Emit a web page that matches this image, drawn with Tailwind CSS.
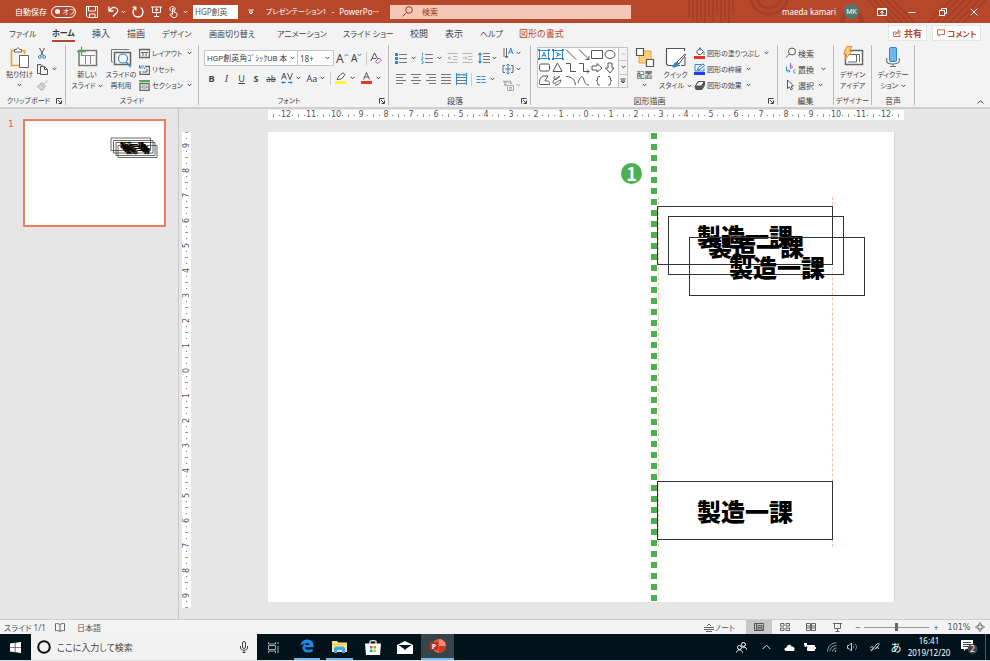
<!DOCTYPE html>
<html lang="ja">
<head>
    <meta charset="UTF-8">
    <meta name="viewport" content="width=device-width, initial-scale=1.0">
    <title>プレゼンテーション1 - PowerPoint</title>
    <script src="https://cdn.jsdelivr.net/npm/@tailwindcss/browser@4"></script>
</head>
<body class="flex min-h-screen flex-col overflow-hidden bg-[#e6e6e6] font-['Noto_Sans','Noto_Sans_CJK_JP',sans-serif] text-[8px] leading-[11px] whitespace-nowrap text-[#444] [font-feature-settings:'palt']">
    <!-- Shared icons -->
    <svg class="hidden">
        <symbol id="chev" viewBox="0 0 5 4"><path d="M.7 .9L2.5 2.8L4.3 .9" fill="none" stroke="currentColor" stroke-width="1"/></symbol>
        <symbol id="launch" viewBox="0 0 6 6"><path d="M.5 5.5V.5H5.500M2 2L5 5M5.500 2.500V5.500H2.500" fill="none" stroke="currentColor"/></symbol>
    </svg>

    <!-- Title bar -->
    <header class="relative flex h-[23px] shrink-0 items-center bg-[#b7472a] text-white">
        <svg class="absolute top-0 right-0 h-[23px] w-[310px]" viewBox="0 0 310 23" fill="none" stroke="#a53f26" stroke-width="2">
            <path d="M9 0V17M13 0V21M17 0V23M21 0V20M25 0V23M29 0V17M33 0V22M37 0V14M41 0V23M45 0V20M49 0V23M53 0V14"/>
            <path d="M71 0C73 9 80 14 89 14S105 9 107 0M77 0C79 5 83 8 89 8S99 5 101 0" stroke-width="3"/>
            <circle cx="172" cy="22" r="10" stroke-width="5"/>
            <path d="M188 0L211 23M194 0L217 23M200 0L223 23M206 0L229 23M212 0L235 23" />
            <path d="M248 23L271 0M255 23L278 0M262 23L285 0M269 23L292 0M276 23L299 0M283 23L306 0"/>
        </svg>
        <div class="relative flex w-[390px] shrink-0 items-center">
            <label for="autosave" class="w-[36px] pl-[15px] box-content">自動保存</label>
            <span class="relative flex h-[12px] w-[25px] items-center rounded-full border border-white">
                <input id="autosave" type="checkbox" class="absolute inset-0 size-full appearance-none">
                <span class="ml-[3px] size-[5px] rounded-full bg-white"></span>
                <span class="ml-[3px] text-[7px]">オフ</span>
            </span>
            <button class="flex w-[32px] justify-center" aria-label="保存"><svg class="size-[12px]" viewBox="0 0 12 12" fill="none" stroke="#fff"><path d="M.5 .5H11.500V11.500H2L.5 10zM2.500 .5V5H9.500V.5M3.500 11.500V8H9V11.500"/></svg></button>
            <button class="flex w-[11px] justify-center" aria-label="元に戻す"><svg class="size-[11px]" viewBox="0 0 11 11" fill="none" stroke="#fff" stroke-width="1.300"><path d="M1 .5V5H5.500M1 5C3 2 5 1 7 1.500C10 2.500 10.500 5 8.500 7L5 10.500"/></svg></button>
            <button class="flex w-[9px] justify-center" aria-label="元に戻すの一覧"><svg class="h-1 w-[5px]"><use href="#chev"/></svg></button>
            <button class="flex w-[20px] justify-center" aria-label="やり直し"><svg class="size-[12px]" viewBox="0 0 12 12" fill="none" stroke="#fff" stroke-width="1.300"><path d="M3.500 1.500C-.5 4 .5 11 6 11S12.500 4 8.500 1.500M.5 1.200H3.800V4.500"/></svg></button>
            <button class="flex w-[17px] justify-center" aria-label="最初から"><svg class="size-[11px]" viewBox="0 0 11 11" fill="none" stroke="#fff"><path d="M0 1H11M1.500 1V6.500H9.500V1M5.500 6.500V10M3 10.500H8M5 2.500L7 3.800L5 5z"/></svg></button>
            <button class="flex w-[16px] justify-center" aria-label="タッチ/マウス モード"><svg class="h-[12px] w-[9px]" viewBox="0 0 9 12" fill="none" stroke="#fff"><path d="M2.500 5.500C0 4 .5 .6 3.500 .6S7 4 5 5M3.500 8.500V2.500C4.500 2 5 2.500 5 3.500V6L7.500 7C8.500 8 8 11 6.500 11.400C4 12 2.500 11 1 8.500C1.500 7.500 2.500 7.500 3.500 8.500"/></svg></button>
            <button class="flex w-[9px] justify-center" aria-label="モードの一覧"><svg class="h-1 w-[5px]"><use href="#chev"/></svg></button>
            <input aria-label="フォント" value="HGP創英" class="ml-[3px] h-[14px] w-[45px] bg-white pl-[2px] text-[#555]">
            <button class="flex w-[26px] justify-center" aria-label="クイック アクセスのユーザー設定"><svg class="size-[6px]" viewBox="0 0 6 6" fill="none" stroke="#fff"><path d="M.5 1H5.500M1 3L3 5L5 3z"/></svg></button>
            <h1 class="flex gap-[5px] pl-[2px]"><span class="text-[7px]">プレゼンテーション1</span><span>-</span><span>PowerPo···</span></h1>
        </div>
        <label class="relative flex h-[14px] w-[241px] shrink-0 items-center bg-[#f7c7b6]">
            <svg class="ml-[12px] size-[11px]" viewBox="0 0 11 11" fill="none" stroke="#9c3b24"><circle cx="7" cy="4" r="3.300"/><path d="M4.500 6.500L.6 10.400"/></svg>
            <input type="search" aria-label="検索" placeholder="検索" class="ml-[9px] w-[160px] placeholder:text-[#9c3b24]">
        </label>
        <div class="relative ml-auto flex items-center">
            <span class="mr-[8px]">maeda kamari</span>
            <button class="mr-[7px] size-[15px] rounded-full bg-[#4f7a70] text-[7px]">MK</button>
            <button class="flex w-[31px] justify-center" aria-label="リボンの表示オプション"><svg class="h-[8px] w-[10px]" viewBox="0 0 10 8" fill="none" stroke="#fff"><path d="M.5 .5H9.500V7.500H.5zM.5 1.500H9.500M5 7V3M3.300 4.700L5 3L6.700 4.700"/></svg></button>
            <button class="flex w-[30px] justify-center" aria-label="最小化"><svg class="size-[8px]" viewBox="0 0 8 8"><path d="M.5 4.500H7.500" stroke="#fff"/></svg></button>
            <button class="flex w-[31px] justify-center" aria-label="元のサイズに戻す"><svg class="size-[8px]" viewBox="0 0 8 8" fill="none" stroke="#fff"><path d="M.5 2.500H5.500V7.500H.5zM2.500 2.500V.5H7.500V5.500H5.500"/></svg></button>
            <button class="flex w-[32px] justify-center" aria-label="閉じる"><svg class="size-[8px]" viewBox="0 0 8 8"><path d="M.7 .7L7.300 7.300M7.300 .7L.7 7.300" stroke="#fff"/></svg></button>
        </div>
    </header>

    <!-- Ribbon tabs -->
    <nav class="flex h-[20px] shrink-0 items-center bg-[#f3f3f3] pl-[9px] text-[9px] leading-[15px]">
        <a href="#" class="w-[43px] text-[8px]">ファイル</a>
        <span class="w-[40px]"><a href="#" class="inline-block border-b-2 border-[#b7472a] text-[8px] font-bold text-[#333]">ホーム</a></span>
        <a href="#" class="w-[35px]">挿入</a>
        <a href="#" class="w-[35px]">描画</a>
        <a href="#" class="w-[47px] text-[8px]">デザイン</a>
        <a href="#" class="w-[68px] text-[8px]">画面切り替え</a>
        <a href="#" class="w-[66px] text-[8px]">アニメーション</a>
        <a href="#" class="w-[67px] text-[8px]">スライド ショー</a>
        <a href="#" class="w-[35px]">校閲</a>
        <a href="#" class="w-[35px]">表示</a>
        <a href="#" class="w-[39px] text-[8px]">ヘルプ</a>
        <a href="#" class="text-[#c0472a]">図形の書式</a>
        <div class="mr-[9px] ml-auto flex gap-[5px] font-bold text-[#b7472a]">
            <button class="flex h-[16px] w-[39px] items-center justify-center gap-[3px] border border-[#e5e5e5] bg-white"><svg class="size-[8px]" viewBox="0 0 8 8" fill="none" stroke="currentColor" stroke-width=".8"><path d="M3 3H.5V7.500H7V5.500M2.500 5.500C3 3.500 4 2.700 5.500 2.700V1L7.600 3L5.500 5V3.800C4 3.800 3.300 4.500 2.500 5.500z"/></svg>共有</button>
            <button class="flex h-[16px] w-[49px] items-center justify-center gap-[3px] border border-[#e5e5e5] bg-white text-[8px]"><svg class="size-[8px]" viewBox="0 0 8 8" fill="none" stroke="currentColor" stroke-width=".8"><path d="M.5 .8H7.500V5.500H3.500L2 7.300V5.500H.5z"/></svg>コメント</button>
        </div>
    </nav>

    <!-- Ribbon -->
    <div class="flex h-[66px] shrink-0 border-b-2 border-[#cfcfcf] bg-[#f3f3f3] pt-[2px] pb-[2px]">
        <section class="flex w-[66px] shrink-0 flex-col justify-between border-r border-[#bbb]">
            <div class="flex pl-[4px]">
                <button class="flex w-[31px] flex-col items-center">
                    <svg class="h-[24px] w-[20px]" viewBox="0 0 20 24" fill="none"><path d="M9 20.500H1.500V5.500H14.500V9" stroke="#eba03c" stroke-width="1.600"/><path d="M4.500 7V4.500H6.500C6.500 2.500 9.500 2.500 9.500 4.500H11.500V7z" fill="#fff" stroke="#666"/><path d="M9.500 10.500H18.500V22.500H9.500z" fill="#fff" stroke="#666"/></svg>
                    <span class="text-[7px]">貼り付け</span>
                    <svg class="mt-[3px] h-1 w-[5px]"><use href="#chev"/></svg>
                </button>
                <div class="flex flex-col pl-[1px]">
                    <button class="flex h-[16px] w-[12px] items-center justify-center" aria-label="切り取り"><svg class="h-[11px] w-[8px]" viewBox="0 0 8 11" fill="none"><path d="M1.500 0L5.500 8M6.500 0L2.500 8" stroke="#555"/><circle cx="1.800" cy="9" r="1.400" stroke="#2b88d8"/><circle cx="6.200" cy="9" r="1.400" stroke="#2b88d8"/></svg></button>
                    <button class="flex h-[16px] items-center gap-[4px]" aria-label="コピー"><svg class="size-[12px]" viewBox="0 0 12 12" fill="none" stroke="#555"><path d="M4 10.500H1.500V1.500H5L7 3.500M4.500 3.500H8.500L11.500 6.500V11.500H4.500zM8.500 3.500V6.500H11.500"/></svg><svg class="h-1 w-[5px]"><use href="#chev"/></svg></button>
                    <button class="flex h-[16px] w-[12px] items-center justify-center" aria-label="書式のコピー"><svg class="size-[11px]" viewBox="0 0 11 11" fill="#ddd" stroke="#aaa"><path d="M10.500 .5L7.500 3.500M5 2.500L8.500 6L7 7.500L3.500 4zM3.500 4L.5 6.500L5 10.500L7 7.500"/></svg></button>
                </div>
            </div>
            <h2 class="flex items-center justify-between pr-[3px] pl-[7px] text-[7px] leading-[9px]">クリップボード<svg class="size-[6px]"><use href="#launch"/></svg></h2>
        </section>

        <section class="flex w-[133px] shrink-0 flex-col justify-between border-r border-[#bbb]">
            <div class="flex pl-[4px]">
                <button class="flex w-[34px] flex-col items-center text-[7px]">
                    <svg class="h-[24px] w-[22px]" viewBox="0 0 22 24" fill="none"><path d="M3 5.500H20.500V20.500H3z" fill="#f8f8f8" stroke="#777" stroke-width="1.500"/><path d="M5 10.500H19M9.500 10.500V19M14.500 10.500V19" stroke="#888"/><path d="M5.500 1.500V11M1 6.500H10" stroke="#4caf50" stroke-width="1.300"/></svg>
                    <span>新しい</span>
                    <span class="flex items-center gap-[2px]">スライド<svg class="h-1 w-[5px]"><use href="#chev"/></svg></span>
                </button>
                <button class="flex w-[34px] flex-col items-center text-[7px]">
                    <svg class="h-[24px] w-[22px]" viewBox="0 0 22 24" fill="none"><path d="M3 17H1.500V4.500H19" stroke="#777"/><path d="M4.500 7.500H20.500V19.500H4.500z" stroke="#666" stroke-width="1.500"/><circle cx="13" cy="13.500" r="4.500" fill="#fff" stroke="#2b88d8" stroke-width="1.200"/><path d="M16 17L21 22" stroke="#2b88d8" stroke-width="1.500"/></svg>
                    <span>スライドの</span>
                    <span>再利用</span>
                </button>
                <div class="flex flex-col pl-[1px]">
                    <button class="flex h-[16px] items-center gap-[2px]"><svg class="size-[11px]" viewBox="0 0 11 11" fill="none" stroke="#666"><path d="M.5 1.500H10.500V9.500H.5z" stroke-width="1.400"/><path d="M2 4.500H9M4 4.500V8M7 4.500V8"/></svg><span class="text-[7px]">レイアウト</span><svg class="ml-[2px] h-1 w-[5px]"><use href="#chev"/></svg></button>
                    <button class="flex h-[16px] items-center gap-[2px]"><svg class="size-[11px]" viewBox="0 0 11 11" fill="none" stroke="#666"><path d="M6 2.500H10.500V10.500H1V7" stroke-width="1.300"/><path d="M3 8H8V5"/><path d="M.5 1V4H3.500M1 4C2 1 5 1 5.500 5" stroke="#2b88d8"/></svg><span class="text-[7px]">リセット</span></button>
                    <button class="flex h-[16px] items-center gap-[2px]"><svg class="size-[11px]" viewBox="0 0 11 11" fill="none"><path d="M0 1H11" stroke="#4caf50" stroke-width="2"/><path d="M1 3.500H10V10.500H1z" stroke="#666" stroke-width="1.300"/><path d="M3 6H8V8H3z" stroke="#888"/></svg><span class="text-[7px]">セクション</span><svg class="ml-[2px] h-1 w-[5px]"><use href="#chev"/></svg></button>
                </div>
            </div>
            <h2 class="text-center text-[7px] leading-[9px]">スライド</h2>
        </section>

        <section class="flex w-[190px] shrink-0 flex-col justify-between border-r border-[#bbb]">
            <div class="flex flex-col gap-[5px] pt-[5px] pl-[5px]">
                <div class="flex h-[16px] items-center">
                    <span class="relative flex h-[16px] w-[94px] items-center border border-[#c4c4c4] bg-white">
                        <select aria-label="フォント名" class="w-full appearance-none pl-[2px] font-['Roboto','Noto_Sans_CJK_JP',sans-serif] text-[8px]"><option>HGP創英角ｺﾞｼｯｸUB 本</option></select>
                        <svg class="pointer-events-none absolute right-[2px] h-1 w-[5px]"><use href="#chev"/></svg>
                    </span>
                    <span class="relative flex h-[16px] w-[36px] items-center border border-l-0 border-[#c4c4c4] bg-white">
                        <select aria-label="フォント サイズ" class="w-full appearance-none pl-[2px] text-[8px]"><option>18+</option></select>
                        <svg class="pointer-events-none absolute right-[3px] h-1 w-[5px]"><use href="#chev"/></svg>
                    </span>
                    <button class="flex w-[16px] pl-[2px] text-[12px]" aria-label="フォント サイズの拡大">A<svg class="h-1 w-[5px] rotate-180 text-[#2b88d8]"><use href="#chev"/></svg></button>
                    <button class="mr-[1px] flex w-[15px] pl-[1px] text-[10px]" aria-label="フォント サイズの縮小">A<svg class="h-1 w-[5px] text-[#2b88d8]"><use href="#chev"/></svg></button>
                    <span class="h-[13px] w-px bg-[#ccc]"></span>
                    <button class="flex w-[18px] justify-center" aria-label="書式のクリア"><svg class="size-[12px]" viewBox="0 0 12 12" fill="none"><path d="M.8 9L4.500 .8L8 8M2 6.500H6" stroke="#555"/><path d="M5.500 9.500L9 6L11.500 8L8.500 11H6.500z" fill="#f3f3f3" stroke="#b455c0"/></svg></button>
                </div>
                <div class="flex h-[14px] items-center text-[9px]">
                    <button class="w-[15px] font-bold">B</button>
                    <button class="w-[15px] font-['Liberation_Serif',serif] text-[10px] italic">I</button>
                    <button class="w-[15px] underline">U</button>
                    <button class="w-[14px] font-bold">S</button>
                    <button class="w-[16px] text-[8px] line-through">ab</button>
                    <button class="flex w-[23px] items-center gap-[3px] pl-[2px]" aria-label="文字の間隔"><svg class="h-[13px] w-[12px]" viewBox="0 0 12 13" fill="none"><path d="M.5 7.500L3 1L5.500 7.500M1.500 5H4.500M6.500 1L9 7.500L11.500 1" stroke="#555"/><path d="M.8 10.500H5M2.500 9L1 10.500L2.500 12M7 10.500H11M9.500 9L11 10.500L9.500 12" stroke="#2b88d8"/></svg><svg class="h-1 w-[5px]"><use href="#chev"/></svg></button>
                    <button class="flex w-[28px] items-center justify-center gap-[3px]">Aa<svg class="h-1 w-[5px]"><use href="#chev"/></svg></button>
                    <span class="h-[13px] w-px bg-[#ccc]"></span>
                    <button class="flex w-[27px] items-center justify-center gap-[4px]" aria-label="蛍光ペンの色"><svg class="h-[12px] w-[11px]" viewBox="0 0 11 12"><path d="M2 7.500L4 4L8 .8L10 2.500L7 6.500L3.500 7.500z" fill="#fff" stroke="#555"/><path d="M0 9H11V12H0z" fill="#fff23c"/></svg><svg class="h-1 w-[5px]"><use href="#chev"/></svg></button>
                    <button class="flex w-[25px] items-center justify-center gap-[4px]" aria-label="フォントの色"><svg class="h-[12px] w-[11px]" viewBox="0 0 11 12"><path d="M2.500 7.500L5.500 .5L8.500 7.500M3.500 5H7.500" fill="none" stroke="#555"/><path d="M0 9H11V12H0z" fill="#ee3124"/></svg><svg class="h-1 w-[5px]"><use href="#chev"/></svg></button>
                </div>
            </div>
            <h2 class="flex items-center pr-[3px] text-[7px] leading-[9px]"><span class="flex-1 text-center">フォント</span><svg class="size-[6px]"><use href="#launch"/></svg></h2>
        </section>

        <section class="flex w-[142px] shrink-0 flex-col justify-between border-r border-[#bbb]">
            <div class="flex pl-[6px]">
                <div class="flex w-[107px] flex-col gap-[7px] pt-[6px]">
                    <div class="flex h-[14px] items-center">
                        <button class="flex w-[26px] items-center gap-[4px]" aria-label="箇条書き"><svg class="size-[12px]" viewBox="0 0 12 12"><path d="M4 2.500H12M4 6.500H12M4 10.500H12" stroke="#777"/><path d="M0 1H3V4H0zM0 5H3V8H0zM0 9H3V12H0z" fill="#2b88d8"/></svg><svg class="h-1 w-[5px]"><use href="#chev"/></svg></button>
                        <button class="flex w-[26px] items-center gap-[4px]" aria-label="段落番号"><svg class="size-[12px]" viewBox="0 0 12 12" fill="none"><path d="M4 2.500H12M4 6.500H12M4 10.500H12" stroke="#777"/><path d="M1.500 .5V3.500M.5 5H2V6L.5 7.500H2M.5 9H2V11.500H.5" stroke="#2b88d8" stroke-width=".8"/></svg><svg class="h-1 w-[5px]"><use href="#chev"/></svg></button>
                        <button class="w-[15px]" aria-label="インデントを減らす"><svg class="h-[12px] w-[11px]" viewBox="0 0 11 12" fill="none" stroke="#b5b5b5"><path d="M.5 1.500H10.500M6 4.500H10.500M6 7.500H10.500M.5 10.500H10.500M1 6H5M2.500 4.500L1 6L2.500 7.500"/></svg></button>
                        <button class="w-[16px]" aria-label="インデントを増やす"><svg class="h-[12px] w-[11px]" viewBox="0 0 11 12" fill="none" stroke="#b5b5b5"><path d="M.5 1.500H10.500M6 4.500H10.500M6 7.500H10.500M.5 10.500H10.500M1 6H5M3.500 4.500L5 6L3.500 7.500"/></svg></button>
                        <button class="flex items-center gap-[2px]" aria-label="行間"><svg class="size-[12px]" viewBox="0 0 12 12" fill="none"><path d="M5 1.500H12M5 4.500H12M5 7.500H12M5 10.500H12" stroke="#777"/><path d="M2 1V11M.5 3L2 1L3.500 3M.5 9L2 11L3.500 9" stroke="#2b88d8" stroke-width="1.200"/></svg><svg class="h-1 w-[5px]"><use href="#chev"/></svg></button>
                    </div>
                    <div class="flex h-[14px] items-center gap-[4px] pl-[1px]">
                        <button aria-label="左揃え"><svg class="h-[12px] w-[11px]" viewBox="0 0 11 12" stroke="#777"><path d="M0 1.500H10M0 4.500H7M0 7.500H10M0 10.500H7"/></svg></button>
                        <button aria-label="中央揃え"><svg class="h-[12px] w-[11px]" viewBox="0 0 11 12" stroke="#777"><path d="M0 1.500H10M2 4.500H8M0 7.500H10M2 10.500H8"/></svg></button>
                        <button aria-label="右揃え"><svg class="h-[12px] w-[11px]" viewBox="0 0 11 12" stroke="#777"><path d="M0 1.500H10M3 4.500H10M0 7.500H10M3 10.500H10"/></svg></button>
                        <button aria-label="両端揃え"><svg class="h-[12px] w-[11px]" viewBox="0 0 11 12" stroke="#777"><path d="M0 1.500H10M0 4.500H10M0 7.500H10M0 10.500H10"/></svg></button>
                        <button aria-label="均等割り付け"><svg class="h-[12px] w-[11px]" viewBox="0 0 11 12" stroke="#777"><path d="M1 4.500H10M1 7.500H10M1 10.500H10"/><path d="M.5 0V12M10.500 0V12M1 1.800H10M3 .5V3M8 .5V3" stroke="#2b88d8"/></svg></button>
                        <span class="h-[13px] w-px bg-[#ccc]"></span>
                        <button class="flex items-center gap-[4px]" aria-label="段組み"><svg class="h-[7px] w-[10px]" viewBox="0 0 10 7" stroke="#2b88d8"><path d="M.5 .5H4.500M5.500 .5H9.500M.5 3.500H4.500M5.500 3.500H9.500M.5 6.500H4.500M5.500 6.500H9.500"/></svg><svg class="h-1 w-[5px]"><use href="#chev"/></svg></button>
                    </div>
                </div>
                <div class="flex flex-col">
                    <button class="flex h-[16px] items-center gap-[2px]" aria-label="文字列の方向"><svg class="size-[12px]" viewBox="0 0 12 12" fill="none"><path d="M2 1V10M4.500 1V11M3 9L4.500 11L6 9" stroke="#666"/><path d="M6.500 7L8.800 1L11 7M7.500 5H10" stroke="#2b88d8"/></svg><svg class="h-1 w-[5px]"><use href="#chev"/></svg></button>
                    <button class="flex h-[16px] items-center gap-[2px]" aria-label="文字の配置"><svg class="size-[12px]" viewBox="0 0 12 12" fill="none"><path d="M3 2.500H1V9.500H3M9 2.500H11V9.500H9" stroke="#666"/><path d="M6 1V11M3 6H9M4.500 2.500L6 1L7.500 2.500M4.500 9.500L6 11L7.500 9.500" stroke="#2b88d8"/></svg><svg class="h-1 w-[5px]"><use href="#chev"/></svg></button>
                    <button class="flex h-[16px] items-center gap-[2px] text-[#aaa]" aria-label="SmartArt に変換"><svg class="size-[12px]" viewBox="0 0 12 12" fill="none" stroke="#aaa"><path d="M1 2.500H8L9.500 5M3 2.500V6H5" stroke-width="1.500"/><path d="M5.500 6.500H11.500V11.500H5.500zM7 8.500H10M7 10H10"/></svg><svg class="h-1 w-[5px]"><use href="#chev"/></svg></button>
                </div>
            </div>
            <h2 class="flex items-center pr-[3px] leading-[9px]"><span class="flex-1 text-center">段落</span><svg class="size-[6px]"><use href="#launch"/></svg></h2>
        </section>

        <section class="flex w-[247px] shrink-0 flex-col justify-between border-r border-[#bbb]">
            <div class="flex pl-[6px]">
                <div class="mt-[2px] flex h-[41px] w-[91px] border border-[#c4c4c4] bg-white">
                    <svg class="h-[39px] w-[80px]" viewBox="0 0 80 39" fill="none" stroke="#555">
                        <g stroke="#2b88d8"><path d="M1.500 2.500H10.500V10.500H1.500zM15.500 2.500H24.500V10.500H15.500z"/><path d="M4 9L6 4L8 9M5 7.500H7M18 4.500L22.500 6.500L18 8.500M19.500 5V8"/></g>
                        <g fill="#2b88d8" stroke="none"><path d="M0 1H2V3H0zM10 1H12V3H10zM0 10H2V12H0zM10 10H12V12H10zM14 1H16V3H14zM24 1H26V3H24zM14 10H16V12H14zM24 10H26V12H24z"/></g>
                        <path d="M28 1.500L38 11.500M41 1.500L51 11.500M51 8V11.500H47.500"/>
                        <path d="M53.500 2.500H64.500V10.500H53.500z"/><ellipse cx="72" cy="6.500" rx="5" ry="4"/>
                        <rect x="1.500" y="16" width="10" height="7" rx="1.500"/><path d="M19.500 15L24 23.500H15z"/>
                        <path d="M28 15.500H32.500V23.500H38M41 15.500H45.500V23.500H51M49 21.500L51 23.500L49 25.500"/>
                        <path d="M54 18H59V15.500L64 20L59 24V22H54zM70 15V20H67.500L72 25L76 20H74V15z"/>
                        <path d="M5 28C1 29 1 36.500 2 36.500H11.500C12 34 10 32 8 33C5 33 9 31 10 28zM17 28C14 32 18 33 21 29C25 27 15 31 15 34C16 38 20 32 23 32C22 36 20 37 17 37"/>
                        <path d="M28 28.500C34 28.500 37 32 37.500 37M40 35C43 26 45 28 46 32S49 37 51 37"/>
                        <path d="M62 28.500H61C59.500 28.500 59.500 29 59.500 31S59 32.500 58 32.500C59 32.500 59.500 32.500 59.500 34.500S59.500 37 61 37H62M70 28.500H71C72.500 28.500 72.500 29 72.500 31S73 32.500 74 32.500C73 32.500 72.500 32.500 72.500 34.500S72.500 37 71 37H70"/>
                    </svg>
                    <div class="flex flex-1 flex-col divide-y divide-[#c4c4c4] border-l border-[#c4c4c4] bg-[#f3f3f3]">
                        <button class="flex flex-1 items-center justify-center" aria-label="上へ"><svg class="h-1 w-[5px] rotate-180 text-[#bbb]"><use href="#chev"/></svg></button>
                        <button class="flex flex-1 items-center justify-center" aria-label="下へ"><svg class="h-1 w-[5px]"><use href="#chev"/></svg></button>
                        <button class="flex flex-1 items-center justify-center" aria-label="その他"><svg class="size-[6px]" viewBox="0 0 6 6" fill="none" stroke="#444"><path d="M.5 1H5.500M1 3L3 5L5 3z"/></svg></button>
                    </div>
                </div>
                <button class="ml-[3px] flex w-[27px] flex-col items-center">
                    <svg class="h-[24px] w-[20px]" viewBox="0 0 20 24"><path d="M4 6H16V18H4z" fill="#fbcf7f" stroke="#eba03c"/><path d="M1.500 3.500H8.500V10.500H1.500zM11.500 14.500H18.500V21.500H11.500z" fill="#fff" stroke="#555" stroke-width="1.200"/></svg>
                    <span>配置</span>
                    <svg class="mt-[3px] h-1 w-[5px]"><use href="#chev"/></svg>
                </button>
                <button class="flex w-[35px] flex-col items-center text-[7px]">
                    <svg class="h-[24px] w-[22px]" viewBox="0 0 22 24"><path d="M15 20.500H3L1.500 19V3.500H19.500V6" fill="#fff" stroke="#555" stroke-width="1.200"/><path d="M20 9L12 17L14 19L20.500 10z" fill="#fff" stroke="#555"/><path d="M7 22C9 21 8 17 12 17L14 19C13 22 10 23 7 22z" fill="#2b88d8"/><path d="M20 12V20.500H16" fill="none" stroke="#555"/></svg>
                    <span>クイック</span>
                    <span class="flex items-center gap-[3px]">スタイル<svg class="h-1 w-[5px]"><use href="#chev"/></svg></span>
                </button>
                <div class="flex flex-col pl-[1px]">
                    <button class="flex h-[16px] items-center gap-[1px]"><svg class="size-[12px]" viewBox="0 0 12 12"><path d="M2.500 5L6 1L9.500 4.500L6.500 7.500H4.500z" fill="#fff" stroke="#555"/><path d="M6 0V4M10 5V8" stroke="#2b88d8"/><path d="M0 9H11V12H0z" fill="#ee3124"/></svg><span class="text-[7px]">図形の塗りつぶし</span><svg class="ml-[3px] h-1 w-[5px]"><use href="#chev"/></svg></button>
                    <button class="flex h-[16px] items-center gap-[1px]"><svg class="size-[12px]" viewBox="0 0 12 12"><path d="M7 1.500H1V8H10V5" fill="none" stroke="#2b88d8"/><path d="M3.500 7L4.500 4.500L9 .8L10.500 2.500L6 6.500z" fill="#fff" stroke="#2b6aa8"/><path d="M0 9H11V12H0z" fill="#1f3cf0"/></svg><span class="text-[7px]">図形の枠線</span><svg class="ml-[3px] h-1 w-[5px]"><use href="#chev"/></svg></button>
                    <button class="flex h-[16px] items-center gap-[1px]"><svg class="size-[12px]" viewBox="0 0 12 12"><path d="M1 8L4 2.500H10.500V6L8 10.500H2z" fill="#555" stroke="#555"/><path d="M1.500 7L4.500 2.500H10L7.500 7z" fill="#fff" stroke="#555"/></svg><span class="text-[7px]">図形の効果</span><svg class="ml-[3px] h-1 w-[5px]"><use href="#chev"/></svg></button>
                </div>
            </div>
            <h2 class="flex items-center pr-[3px] leading-[9px]"><span class="flex-1 text-center">図形描画</span><svg class="size-[6px]"><use href="#launch"/></svg></h2>
        </section>

        <section class="flex w-[56px] shrink-0 flex-col justify-between border-r border-[#bbb]">
            <div class="flex flex-col pl-[7px]">
                <button class="flex h-[16px] items-center gap-[1px]"><svg class="size-[12px]" viewBox="0 0 12 12" fill="none" stroke="#555"><circle cx="7" cy="4.500" r="3.500"/><path d="M4.500 7L1 10.500"/></svg>検索</button>
                <button class="flex h-[16px] items-center gap-[1px]"><svg class="size-[12px]" viewBox="0 0 12 12" fill="none"><path d="M5.500 0V5.500M5.500 3C8 2 8 6 5.500 5" stroke="#b455c0"/><path d="M10.500 7C8 6 8 11 10.500 10M1.500 3.500V8H5M3.500 6.500L5 8L3.500 9.500" stroke="#2b88d8"/></svg>置換<svg class="ml-[6px] h-1 w-[5px]"><use href="#chev"/></svg></button>
                <button class="flex h-[16px] items-center gap-[1px]"><svg class="size-[12px]" viewBox="0 0 12 12" fill="#fff" stroke="#555"><path d="M2.500 1V9.500L4.500 8L6 11L7.500 10L6 7.500L8.500 7z"/></svg>選択<svg class="ml-[3px] h-1 w-[5px]"><use href="#chev"/></svg></button>
            </div>
            <h2 class="text-center leading-[9px]">編集</h2>
        </section>

        <section class="flex w-[38px] shrink-0 flex-col items-center justify-between border-r border-[#bbb] text-[7px]">
            <button class="flex flex-col items-center">
                <svg class="h-[24px] w-[22px]" viewBox="0 0 22 24" fill="none"><path d="M3.500 5.500H20.500V19.500H3.500z" fill="#fff" stroke="#666" stroke-width="1.500"/><path d="M6 9.500H17.500V17M14.500 9.500V17H6" stroke="#666"/><path d="M5 1.500H10L7.500 6H10L3 15L4.500 9H1.500z" fill="#fbcf7f" stroke="#eb8a2c"/></svg>
                <span>デザイン</span>
                <span>アイデア</span>
            </button>
            <h2 class="leading-[9px]">デザイナー</h2>
        </section>

        <section class="flex w-[43px] shrink-0 flex-col items-center justify-between border-r border-[#bbb] text-[7px]">
            <button class="flex flex-col items-center">
                <svg class="h-[24px] w-[14px]" viewBox="0 0 14 24" fill="none"><rect x="3.500" y="2.500" width="7" height="14" rx="1" fill="#6db7ea" stroke="#2b88d8"/><path d="M.7 13V16C.7 20 13.300 20 13.300 16V13M7 19V22M4 21.500H10" stroke="#777" stroke-width="1.200"/></svg>
                <span>ディクテー</span>
                <span class="flex items-center gap-[3px]">ション<svg class="h-1 w-[5px]"><use href="#chev"/></svg></span>
            </button>
            <h2 class="text-[8px] leading-[9px]">音声</h2>
        </section>
        <button class="mr-[6px] ml-auto self-end" aria-label="リボンを折りたたむ"><svg class="h-[6px] w-[7px]" viewBox="0 0 7 6"><path d="M.7 4.500L3.500 1.700L6.300 4.500" fill="none" stroke="#444"/></svg></button>
    </div>

    <main class="flex flex-1">
        <!-- Slide thumbnails -->
        <aside class="flex w-[179px] shrink-0 items-start border-r border-[#c8c8c8] pt-[10px] pl-[8px]">
            <span class="w-[15px] font-['DejaVu_Sans',sans-serif] text-[9px] text-[#e0603c]">1</span>
            <svg class="h-[108px] w-[143px] border-2 border-[#f07c5e] bg-white" viewBox="0 0 139 104" fill="none" stroke="#444" stroke-width=".8">
                <path d="M86 17H125.500V29.500H86zM88.500 19.500H128V32H88.500zM91 21.500H130V34.500H91zM93 24.500H132V36.500H93z"/>
                <g fill="#000" stroke="none" font-size="6" font-weight="900">
                    <text x="95" y="26">製造一課</text><text x="97" y="28">製造一課</text><text x="99" y="30">製造一課</text><text x="101" y="32">製造一課</text>
                </g>
            </svg>
        </aside>

        <!-- Editing area -->
        <div class="flex flex-1 flex-col pt-px">
            <div id="ruler-x" class="mr-[86px] ml-[89px] flex h-[10px] items-center bg-white px-[5px] font-['DejaVu_Sans',sans-serif] text-[8px] leading-[10px] text-[#555]"></div>
            <div class="mt-3 flex items-start">
                <div id="ruler-y" class="ml-[3px] flex w-[9px] flex-col items-center bg-white font-['DejaVu_Sans',sans-serif] text-[8px] leading-[9px] text-[#555]"></div>
                <div class="relative mr-[96px] ml-[77px] aspect-[4/3] flex-1 bg-white font-['Noto_Sans_CJK_JP',sans-serif] text-[24px] leading-[30px] font-black text-black shadow-[1px_0_0_#d8d8d8]">
                    <div class="absolute top-[65px] left-[390px] h-[350px] w-[175px] border-x border-dashed border-[#f0bfb0]"></div>
                    <div class="absolute top-[74px] left-[389px] flex h-[59px] w-[176px] items-center justify-center border border-[#333]">製造一課</div>
                    <div class="absolute top-[84px] left-[400px] flex h-[59px] w-[176px] items-center justify-center border border-[#333]">製造一課</div>
                    <div class="absolute top-[105px] left-[421px] flex h-[59px] w-[176px] items-center justify-center border border-[#333]">製造一課</div>
                    <div class="absolute top-[349px] left-[389px] flex h-[59px] w-[176px] items-center justify-center border border-[#333]">製造一課</div>
                    <div class="absolute top-px left-[383px] h-[468px] w-[6px] bg-[repeating-linear-gradient(#4caf50_0_6px,transparent_6px_11px)]"></div>
                    <div class="absolute top-[31px] left-[353px] flex size-[21px] items-center justify-center rounded-full bg-[#4caf50] text-[18px] leading-[21px] font-bold text-white">1</div>
                </div>
            </div>
        </div>
    </main>

    <!-- Status bar -->
    <footer class="flex h-[15px] shrink-0 items-center border-t border-[#cfcfcf] bg-[#f3f3f3] pl-[4px] text-[#555]">
        <span class="w-[51px]">スライド 1/1</span>
        <button class="w-[22px]" aria-label="スペル チェック"><svg class="h-[9px] w-[10px]" viewBox="0 0 10 9" fill="none" stroke="#666"><path d="M5 1.500C3.500 .5 2 .5 .5 .5V7.500C2 7.500 3.500 7.500 5 8.500C6 7.500 8 7.500 9.500 7.500V.5C8 .5 6 .5 5 1.500zV8.500"/></svg></button>
        <span>日本語</span>
        <div class="ml-auto flex items-center">
            <button class="mr-[11px] flex items-center gap-[1px]"><svg class="h-[9px] w-[10px]" viewBox="0 0 10 9" fill="none" stroke="#666"><path d="M0 4.500H10M0 6.500H10M2 8.500H8M3 3L5 1L7 3"/></svg>ノート</button>
            <button class="flex h-[14px] w-[26px] items-center justify-center bg-[#c8c8c8]" aria-label="標準"><svg class="h-[8px] w-[10px]" viewBox="0 0 10 8" fill="none" stroke="#555"><path d="M.5 .5H9.500V7.500H.5zM2.500 1V7M4 2.500H8V4.500H4zM3 6H9"/></svg></button>
            <button class="flex w-[26px] justify-center" aria-label="スライド一覧"><svg class="h-[8px] w-[10px]" viewBox="0 0 10 8" fill="none" stroke="#666"><path d="M.5 .5H4V3H.5zM6 .5H9.500V3H6zM.5 5H4V7.500H.5zM6 5H9.500V7.500H6z"/></svg></button>
            <button class="flex w-[26px] justify-center" aria-label="閲覧表示"><svg class="h-[9px] w-[10px]" viewBox="0 0 10 9" fill="none" stroke="#666"><path d="M.5 .5H4.500V7.500H.5zM5.500 .5H9.500V7.500H5.500zM1 3H4M1 5H4M6 3H9M6 5H9"/></svg></button>
            <button class="flex w-[27px] justify-center" aria-label="スライド ショー"><svg class="size-[9px]" viewBox="0 0 9 9" fill="none" stroke="#666"><path d="M0 .5H9M1.500 .5V5.500H7.500V.5M4.500 5.500V8M2.500 8.500H6.500"/></svg></button>
            <button class="w-[13px] text-[9px]" aria-label="縮小">−</button>
            <input type="range" aria-label="ズーム" min="10" max="190" value="101" class="h-[9px] w-[65px] appearance-none bg-[linear-gradient(#999,#999)] bg-[length:100%_1px] bg-center bg-no-repeat [&::-webkit-slider-thumb]:h-[8px] [&::-webkit-slider-thumb]:w-[3px] [&::-webkit-slider-thumb]:appearance-none [&::-webkit-slider-thumb]:bg-[#666]">
            <button class="w-[14px] text-[9px]" aria-label="拡大">+</button>
            <button class="w-[32px] font-['DejaVu_Sans',sans-serif]">101%</button>
            <button class="mr-[5px]" aria-label="ウィンドウに合わせる"><svg class="size-[10px]" viewBox="0 0 10 10" fill="none" stroke="#666"><path d="M3 3H7V7H3zM3.500 2L5 .6L6.500 2M3.500 8L5 9.400L6.500 8M2 3.500L.6 5L2 6.500M8 3.500L9.400 5L8 6.500"/></svg></button>
        </div>
    </footer>

    <!-- Taskbar -->
    <div class="flex h-[27px] shrink-0 items-stretch border-b border-[#ddd] bg-[#01131a] text-white">
        <button class="flex w-[31px] items-center justify-center" aria-label="スタート"><svg class="size-[11px]" viewBox="0 0 11 11" fill="#fff"><path d="M0 1.500L4.800 .8V5.200H0zM5.400 .7L11 0V5.200H5.400zM0 5.800H4.800V10.200L0 9.500zM5.400 5.800H11V11L5.400 10.300z"/></svg></button>
        <label class="flex w-[226px] items-center bg-[#f2f2f2] pr-[9px] pl-[6px]">
            <svg class="size-[14px] shrink-0" viewBox="0 0 14 14"><circle cx="7" cy="7" r="5.800" fill="none" stroke="#111" stroke-width="2"/></svg>
            <input type="search" aria-label="検索" placeholder="ここに入力して検索" class="min-w-0 flex-1 pl-[6px] text-[9px] placeholder:text-[#444]">
            <svg class="h-[12px] w-[8px]" viewBox="0 0 8 12" fill="none" stroke="#444"><rect x="2.500" y=".5" width="3" height="7" rx="1.500"/><path d="M.5 5V7C.5 10 7.500 10 7.500 7V5M4 9.500V12M2.500 11.500H5.500"/></svg>
        </label>
        <button class="flex w-[33px] items-center justify-center" aria-label="タスク ビュー"><svg class="size-[11px]" viewBox="0 0 11 11" fill="none" stroke="#aaa"><path d="M.5 0V2H7.500V0M.5 3.500H7.500V7.500H.5zM.5 11V9H7.500V11M10 0V2M10 4V11"/></svg></button>
        <button class="flex w-[33px] items-center justify-center" aria-label="Edge"><span class="flex h-full w-[26px] items-center justify-center border-b-2 border-[#76b9ed]"><svg class="size-[14px]" viewBox="0 0 14 14"><path d="M.5 6.500C1 2.500 4 .5 7.500 .5C11.500 .5 13.500 3.500 13.500 6.500V8.200H5C5.300 11 9.500 11.700 12.700 9.800V12.500C9 14.500 3.500 14 2.500 9.500C2.200 7.500 3.500 5.500 5 4.700C3 5 1.500 5.500 .5 6.500zM5.200 6H9.300C9.300 3.200 5.500 3.200 5.200 6z" fill="#1e88e5"/></svg></span></button>
        <button class="flex w-[33px] items-center justify-center" aria-label="エクスプローラー"><span class="flex h-full w-[27px] items-center justify-center border-b-2 border-[#76b9ed]"><svg class="h-[13px] w-[15px]" viewBox="0 0 15 13"><path d="M0 1H5L6.500 2.500H15V12H0z" fill="#fbe08a"/><path d="M0 4H15V5H0z" fill="#f2c94f"/><path d="M2 13V8L3.500 6.500H11.500L13 8V13H10V10H5V13z" fill="#3fa9ea"/></svg></span></button>
        <button class="flex w-[33px] items-center justify-center" aria-label="Microsoft Store"><svg class="h-[15px] w-[16px]" viewBox="0 0 16 15"><path d="M5 4V1.500C5 .3 11 .3 11 1.500V4" fill="none" stroke="#fff" stroke-width="1.200"/><path d="M0 3.500H16L15 15H1z" fill="#fff"/><path d="M5 6H7.500V8.500H5z" fill="#f25022"/><path d="M8.500 6H11V8.500H8.500z" fill="#7fba00"/><path d="M5 9.500H7.500V12H5z" fill="#00a4ef"/><path d="M8.500 9.500H11V12H8.500z" fill="#ffb900"/></svg></button>
        <button class="flex w-[32px] items-center justify-center" aria-label="メール"><svg class="h-[13px] w-[16px]" viewBox="0 0 16 13"><path d="M0 4L8 0L16 4V13H0z" fill="#fff"/><path d="M1.500 4H14.500L8 8.500L9.500 10.500L6.500 7.500z" fill="#01131a"/></svg></button>
        <button class="flex w-[33px] items-center justify-center border-b-2 border-[#76b9ed] bg-[#37454a]" aria-label="PowerPoint"><svg class="size-[16px]" viewBox="0 0 16 16"><circle cx="9" cy="8" r="7" fill="#e2593a"/><path d="M9 1A7 7 0 0 1 16 8H9z" fill="#f58a6b"/><path d="M9 15A7 7 0 0 0 16 8H9z" fill="#c93a22"/><path d="M0 4H8V12H0z" fill="#b7321c"/><text x="4" y="10.500" text-anchor="middle" font-size="7" font-weight="700" fill="#fff">P</text></svg></button>
        <div class="ml-auto flex items-center">
            <button class="flex w-[26px] justify-center" aria-label="People"><svg class="size-[11px]" viewBox="0 0 11 11" fill="none" stroke="#fff"><circle cx="7.500" cy="2.500" r="2"/><circle cx="3.500" cy="5.500" r="2"/><path d="M.5 10.500C1 7 6 7 6.500 10.500M6.500 5.500C8.500 4.500 10.500 5.500 10.500 7.500"/></svg></button>
            <button class="flex w-[25px] justify-center" aria-label="隠れているインジケーター"><svg class="h-[6px] w-[9px]" viewBox="0 0 9 6"><path d="M.7 5L4.500 1.200L8.300 5" fill="none" stroke="#ddd"/></svg></button>
            <button class="flex w-[20px] justify-center" aria-label="OneDrive"><svg class="h-[7px] w-[11px]" viewBox="0 0 11 7"><path d="M2.500 7C-.5 7 0 3.500 2.500 3.500C3 .5 6.500 -.5 7.500 2.500C11 2 11.500 7 9 7z" fill="#fff"/></svg></button>
            <button class="flex w-[22px] justify-center" aria-label="バッテリー"><svg class="h-[8px] w-[12px]" viewBox="0 0 12 8"><path d="M2.500 2.500H10.500V7.500H3.500V5" fill="#fff" stroke="#fff"/><path d="M11 4H12V6H11zM0 0H3V2L2 4H1L0 2z" fill="#fff"/></svg></button>
            <button class="flex w-[21px] justify-center" aria-label="ネットワーク"><svg class="size-[10px]" viewBox="0 0 10 10" fill="none" stroke="#999"><path d="M.5 9.500C.5 4.500 4.500 .8 9.500 .8M3 9.500C3 6 6 3.500 9.500 3.500M5.500 9.500C5.500 7.500 7.500 6 9.500 6"/><circle cx="8.500" cy="9" r=".6" fill="#fff"/></svg></button>
            <button class="flex w-[20px] justify-center" aria-label="音量"><svg class="size-[10px]" viewBox="0 0 10 10" fill="none" stroke="#ccc"><path d="M.5 3.500H2L4.500 1V9L2 6.500H.5z"/><path d="M6 3.500C7 4.500 7 5.500 6 6.500M8 2C10 4 10 6 8 8" stroke="#888"/></svg></button>
            <button class="flex w-[25px] justify-center" aria-label="Windows Ink"><svg class="size-[10px]" viewBox="0 0 10 10" fill="none" stroke="#ddd"><path d="M1 9L7 2C8.500 .5 10 2 8.500 3.500L5 7.500M.5 6C1.500 3 4 5 3 7S1 9 .5 7.500M6 6.500C7 4.500 9.500 5.500 8 7"/></svg></button>
            <button class="w-[18px] text-[11px]">あ</button>
            <time class="w-[48px] text-center leading-[12px]">16:41<br>2019/12/20</time>
            <button class="relative flex w-[32px] justify-center" aria-label="通知"><svg class="h-[14px] w-[17px]" viewBox="0 0 17 14"><path d="M0 0H12V9H5L3 11V9H0z" fill="#fff"/><path d="M2 2.500H10M2 4.500H10M2 6.500H7" stroke="#01131a" stroke-width=".8"/><circle cx="11.500" cy="9" r="5" fill="#444"/><text x="11.500" y="12" text-anchor="middle" font-size="8" fill="#fff">2</text></svg></button>
            <span class="mr-[4px] h-[26px] w-px bg-[#556]"></span>
        </div>
    </div>

    <script>
        // Rulers count down to zero in the middle and back up again
        function fillRuler(id, max, cellClass, numberClass, tickClass, dotClass) {
            const ruler = document.getElementById(id);
            let html = `<span class="${tickClass}"></span>`;
            for (let i = -max; i <= max; i++) {
                html += `<span class="${cellClass}"><i class="${dotClass}"></i><span class="${numberClass}">${Math.abs(i)}</span><i class="${dotClass}"></i></span><span class="${tickClass}"></span>`;
            }
            ruler.innerHTML = html;
        }
        fillRuler('ruler-x', 12, 'flex min-w-0 flex-1 items-center justify-between px-[5px]', '', 'h-[3px] w-px bg-[#999]', 'h-px w-px bg-[#777]');
        fillRuler('ruler-y', 9, 'flex h-[24px] flex-col items-center justify-between py-[5px]', 'flex h-[8px] rotate-180 items-center justify-center [writing-mode:vertical-rl]', 'h-px w-[3px] bg-[#999]', 'h-px w-px bg-[#777]');
    </script>
</body>
</html>
